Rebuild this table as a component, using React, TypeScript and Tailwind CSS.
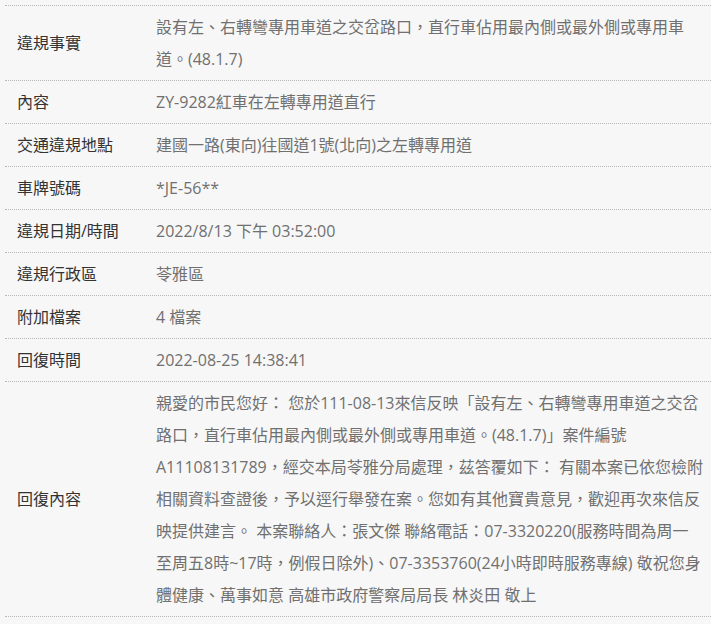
const rows: { label: string; value: string }[] = [
  {
    label: "違規事實",
    value: "設有左、右轉彎專用車道之交岔路口，直行車佔用最內側或最外側或專用車道。(48.1.7)",
  },
  { label: "內容", value: "ZY-9282紅車在左轉專用道直行" },
  { label: "交通違規地點", value: "建國一路(東向)往國道1號(北向)之左轉專用道" },
  { label: "車牌號碼", value: "*JE-56**" },
  { label: "違規日期/時間", value: "2022/8/13 下午 03:52:00" },
  { label: "違規行政區", value: "苓雅區" },
  { label: "附加檔案", value: "4 檔案" },
  { label: "回復時間", value: "2022-08-25 14:38:41" },
  {
    label: "回復內容",
    value:
      "親愛的市民您好： 您於111-08-13來信反映「設有左、右轉彎專用車道之交岔路口，直行車佔用最內側或最外側或專用車道。(48.1.7)」案件編號A11108131789，經交本局苓雅分局處理，茲答覆如下： 有關本案已依您檢附相關資料查證後，予以逕行舉發在案。您如有其他寶貴意見，歡迎再次來信反映提供建言。 本案聯絡人：張文傑 聯絡電話：07-3320220(服務時間為周一至周五8時~17時，例假日除外)、07-3353760(24小時即時服務專線) 敬祝您身體健康、萬事如意 高雄市政府警察局局長 林炎田 敬上",
  },
];

export default function App() {
  return (
    <div className="min-h-[624px] w-full bg-[#f7f7f7] pt-[5px] pl-[5px] font-['Open_Sans','Noto_Sans_CJK_TC',sans-serif] text-[16px]">
      <div className="w-[706px] border-t border-dotted border-[#b8b8b8]">
        {rows.map((row) => (
          <div
            key={row.label}
            className="grid grid-cols-[139px_1fr] border-b border-dotted border-[#b8b8b8]"
          >
            <div className="flex items-center py-[5px] pl-3 leading-[32px] text-[#333]">
              {row.label}
            </div>
            <div className="py-[5px] pl-3 pr-[8px] leading-[32px] text-[#707070]">
              {row.value}
            </div>
          </div>
        ))}
      </div>
    </div>
  );
}
